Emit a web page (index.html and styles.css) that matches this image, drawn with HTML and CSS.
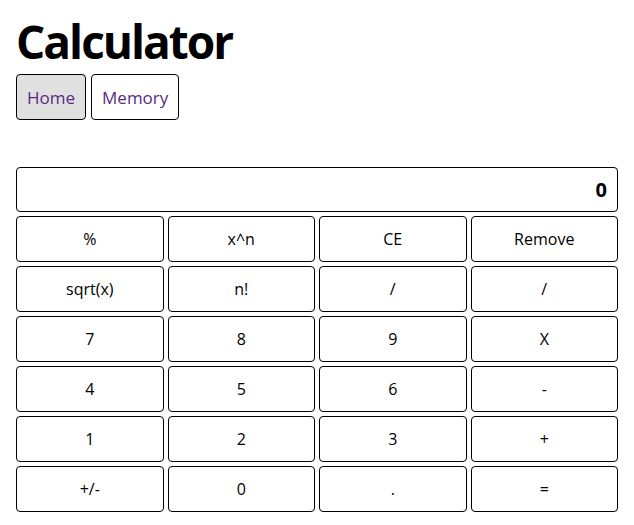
FILE: index.html
```html
<!DOCTYPE html>
<html>
<head>
<meta charset="utf-8">
<link rel="stylesheet" href="styles.css">
</head>
<body>
<h1 class="title">Calculator</h1>
<nav class="nav">
  <a class="nav-btn active" href="#">Home</a>
  <a class="nav-btn" href="#">Memory</a>
</nav>
<div class="calc">
  <div class="display">0</div>
  <button class="key">%</button>
  <button class="key">x^n</button>
  <button class="key">CE</button>
  <button class="key">Remove</button>
  <button class="key">sqrt(x)</button>
  <button class="key">n!</button>
  <button class="key">/</button>
  <button class="key">/</button>
  <button class="key">7</button>
  <button class="key">8</button>
  <button class="key">9</button>
  <button class="key">X</button>
  <button class="key">4</button>
  <button class="key">5</button>
  <button class="key">6</button>
  <button class="key">-</button>
  <button class="key">1</button>
  <button class="key">2</button>
  <button class="key">3</button>
  <button class="key">+</button>
  <button class="key">+/-</button>
  <button class="key">0</button>
  <button class="key">.</button>
  <button class="key">=</button>
</div>
</body>
</html>
```
FILE: styles.css
```css
html, body {
  margin: 0;
  padding: 0;
  background: #fff;
}
body {
  padding: 0 16px;
  font-family: "Open Sans", "Noto Sans", sans-serif;
  color: #000;
}
.title {
  margin: 0;
  padding-top: 10px;
  font-size: 46px;
  line-height: 62px;
  font-weight: 700;
  letter-spacing: -2px;
}
.nav {
  display: flex;
  gap: 5px;
  margin-top: 2px;
}
.nav-btn {
  display: flex;
  align-items: center;
  justify-content: center;
  height: 46px;
  box-sizing: border-box;
  padding: 0 10px;
  border: 1px solid #000;
  border-radius: 4px;
  color: #582c83;
  text-decoration: none;
  font-size: 17px;
  background: #fff;
}
.nav-btn.active {
  background: #e0e0e0;
}
.calc {
  margin-top: 47px;
  display: grid;
  grid-template-columns: repeat(4, 1fr);
  grid-template-rows: 45px;
  grid-auto-rows: 46px;
  gap: 4px;
}
.display {
  grid-column: 1 / -1;
  box-sizing: border-box;
  border: 1px solid #000;
  border-radius: 4px;
  display: flex;
  align-items: center;
  justify-content: flex-end;
  padding-right: 10px;
  font-weight: 700;
  font-size: 20px;
}
.key {
  margin: 0;
  box-sizing: border-box;
  border: 1px solid #000;
  border-radius: 4px;
  background: #fff;
  color: #000;
  font-family: "Open Sans", "Noto Sans", sans-serif;
  font-size: 16px;
  padding: 0;
}
```
